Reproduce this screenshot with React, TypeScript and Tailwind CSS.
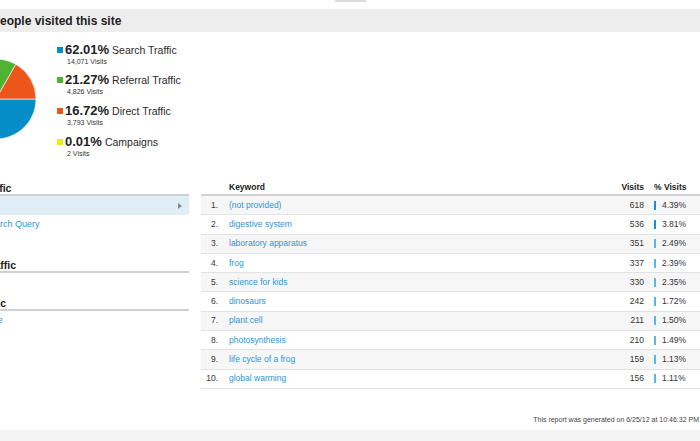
import React from "react";

const legend = [
  { color: "bg-[#058dc7]", pct: "62.01%", label: "Search Traffic", visits: "14,071 Visits" },
  { color: "bg-[#50b432]", pct: "21.27%", label: "Referral Traffic", visits: "4,826 Visits" },
  { color: "bg-[#ed561b]", pct: "16.72%", label: "Direct Traffic", visits: "3,793 Visits" },
  { color: "bg-[#edef00]", pct: "0.01%", label: "Campaigns", visits: "2 Visits" },
];

const rows = [
  { n: "1.", k: "(not provided)", v: "618", p: "4.39%", dark: true },
  { n: "2.", k: "digestive system", v: "536", p: "3.81%", dark: true },
  { n: "3.", k: "laboratory apparatus", v: "351", p: "2.49%", dark: false },
  { n: "4.", k: "frog", v: "337", p: "2.39%", dark: false },
  { n: "5.", k: "science for kids", v: "330", p: "2.35%", dark: false },
  { n: "6.", k: "dinosaurs", v: "242", p: "1.72%", dark: false },
  { n: "7.", k: "plant cell", v: "211", p: "1.50%", dark: false },
  { n: "8.", k: "photosynthesis", v: "210", p: "1.49%", dark: false },
  { n: "9.", k: "life cycle of a frog", v: "159", p: "1.13%", dark: false },
  { n: "10.", k: "global warming", v: "156", p: "1.11%", dark: false },
];

function Pie() {
  return (
    <svg width="80" height="80" viewBox="0 0 80 80" className="ml-[-44px] mt-[27px] shrink-0">
      <path d="M40 40 L80 40 A40 40 0 1 1 10.86 12.6 Z" fill="#058dc7" stroke="#fff" strokeWidth="0.6" />
      <path d="M40 40 L10.86 12.6 A40 40 0 0 1 59.88 5.29 Z" fill="#50b432" stroke="#fff" strokeWidth="0.6" />
      <path d="M40 40 L59.88 5.29 A40 40 0 0 1 80 40 Z" fill="#ed561b" stroke="#fff" strokeWidth="0.6" />
    </svg>
  );
}

function LeftHeader({ text }: { text: string }) {
  return (
    <div className="h-[19px] border-b-2 border-[#d0d0d0] flex items-end pl-[4px]">
      <span className="text-[10.5px] leading-[11px] font-bold text-[#222] whitespace-nowrap">{text}</span>
    </div>
  );
}

function LeftRow({ text, active }: { text: string; active?: boolean }) {
  return (
    <div
      className={`h-[19.3px] flex items-center justify-between pl-[9px] pr-[7px] ${active ? "bg-[#deedf6]" : ""}`}
    >
      <span className="text-[9px] leading-[11px] text-[#2c95d3] whitespace-nowrap">{text}</span>
      {active && (
        <svg width="4" height="6" viewBox="0 0 4 6">
          <path d="M0 0 L4 3 L0 6 Z" fill="#8a8a8a" />
        </svg>
      )}
    </div>
  );
}

export default function App() {
  return (
    <div className="w-[700px] h-[441px] overflow-hidden bg-white font-['Liberation_Sans',Arial,sans-serif] text-[#222] flex flex-col">
      <div className="h-[9px] shrink-0">
        <div className="ml-[335px] w-[31px] h-[2px] bg-[#dcdcdc]" />
      </div>
      <div className="h-[23px] shrink-0 bg-[#eeeeee] flex items-center">
        <span className="ml-[-8px] text-[12px] leading-[14px] font-bold whitespace-nowrap text-[#222]">
          People visited this site
        </span>
      </div>

      <div className="h-[145px] shrink-0 flex">
        <Pie />
        <div className="ml-[21px] pt-[10.5px] flex flex-col gap-[6.7px]">
          {legend.map((l) => (
            <div key={l.label} className="flex flex-col">
              <div className="h-[14px] flex items-center whitespace-nowrap">
                <span className={`w-[6px] h-[6px] ${l.color} mr-[2px]`} />
                <span className="text-[13px] leading-[14px] font-bold text-[#222]">{l.pct}</span>
                <span className="ml-[3px] text-[10.5px] leading-[14px] text-[#2a2a2a]">{l.label}</span>
              </div>
              <div className="h-[10px] ml-[10px] text-[7px] leading-[10px] text-[#333] whitespace-nowrap">
                {l.visits}
              </div>
            </div>
          ))}
        </div>
      </div>

      <div className="flex shrink-0">
        <div className="ml-[-62px] w-[251px] shrink-0 flex flex-col">
          <LeftHeader text="Search Traffic" />
          <LeftRow text="Keyword" active />
          <LeftRow text="Matched Search Query" />
          <LeftRow text="Source" />
          <LeftHeader text="Referral Traffic" />
          <LeftRow text="Source" />
          <LeftHeader text="Direct Traffic" />
          <LeftRow text="Landing Page" />
        </div>

        <div className="ml-[12px] flex-1 flex flex-col text-[8.5px] text-[#333]">
          <div className="h-[19px] border-b-2 border-[#d0d0d0] flex items-end pb-[1px] font-bold text-[#222] leading-[11px]">
            <span className="w-[17px]" />
            <span className="ml-[11px] flex-1">Keyword</span>
            <span className="w-[50px] text-right">Visits</span>
            <span className="ml-[10px] w-[46px]">% Visits</span>
          </div>
          {rows.map((r, i) => (
            <div
              key={r.n}
              className={`h-[19.3px] border-b border-[#e2e2e2] flex items-center leading-[11px] ${
                i % 2 === 0 ? "bg-[#f6f6f6]" : "bg-white"
              }`}
            >
              <span className="w-[17px] text-right text-[#333]">{r.n}</span>
              <span className="ml-[11px] flex-1 text-[#2c95d3] whitespace-nowrap">{r.k}</span>
              <span className="w-[50px] text-right">{r.v}</span>
              <span className="ml-[10px] w-[46px] flex items-center">
                <span className={`w-[2px] h-[9px] ${r.dark ? "bg-[#1790d2]" : "bg-[#5cb6e4]"}`} />
                <span className="ml-[6px]">{r.p}</span>
              </span>
            </div>
          ))}
        </div>
      </div>

      <div className="flex-1 flex items-end justify-end pb-[6px] pr-[1px]">
        <span className="text-[7px] leading-[8px] text-[#444] whitespace-nowrap">
          This report was generated on 6/25/12 at 10:46:32 PM
        </span>
      </div>
      <div className="h-[11px] shrink-0 bg-[#f3f3f3]" />
    </div>
  );
}
